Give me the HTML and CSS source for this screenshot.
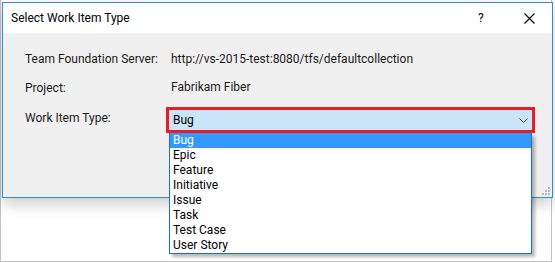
FILE: index.html
```html
<!DOCTYPE html>
<html>
<head>
<meta charset="utf-8">
<link rel="stylesheet" href="styles.css">
</head>
<body>
<div class="frame">
  <div class="dialog">
    <div class="titlebar">
      <span class="title">Select Work Item Type</span>
      <span class="help">?</span>
      <svg class="close" width="11" height="11" viewBox="0 0 11 11"><path d="M0.5 0.5 L10.5 10.5 M10.5 0.5 L0.5 10.5" stroke="#000" stroke-width="1.1" fill="none"/></svg>
    </div>
    <div class="content">
      <div class="form">
        <div class="label r1">Team Foundation Server:</div>
        <div class="value r1">http://vs-2015-test:8080/tfs/defaultcollection</div>
        <div class="label r2">Project:</div>
        <div class="value r2v">Fabrikam Fiber</div>
        <div class="label r3l">Work Item Type:</div>
        <div class="combo-wrap r3">
          <div class="combo">
            <span class="combo-text">Bug</span>
            <svg class="chevron" width="9" height="5" viewBox="0 0 9 5"><path d="M0.5 0.5 L4.5 4.5 L8.5 0.5" stroke="#444" stroke-width="1" fill="none"/></svg>
          </div>
          <ul class="list">
            <li class="sel">Bug</li>
            <li>Epic</li>
            <li>Feature</li>
            <li>Initiative</li>
            <li>Issue</li>
            <li>Task</li>
            <li>Test Case</li>
            <li>User Story</li>
          </ul>
        </div>
      </div>
      <svg class="grip" width="8" height="8" viewBox="0 0 8 8">
        <rect x="6" y="0" width="2" height="2" fill="#b9b9b9"/>
        <rect x="3" y="3" width="2" height="2" fill="#b9b9b9"/>
        <rect x="6" y="3" width="2" height="2" fill="#b9b9b9"/>
        <rect x="0" y="6" width="2" height="2" fill="#b9b9b9"/>
        <rect x="3" y="6" width="2" height="2" fill="#b9b9b9"/>
        <rect x="6" y="6" width="2" height="2" fill="#b9b9b9"/>
      </svg>
    </div>
  </div>
</div>
</body>
</html>
```
FILE: styles.css
```css
html, body {
  margin: 0;
  padding: 0;
  background: #ffffff;
}
body {
  font-family: Roboto, "Noto Sans", sans-serif;
  font-size: 12px;
  color: #000;
}
.frame {
  width: 550px;
  height: 259px;
  border-left: 1px solid #c3c3c3;
  border-right: 1px solid #c3c3c3;
  border-bottom: 1px solid #c3c3c3;
  padding-top: 2px;
  box-sizing: content-box;
}
.dialog {
  margin-left: 1px;
  width: 549px;
  height: 194px;
  border: 1px solid #2b8cd8;
  background: #f0f0f0;
  box-shadow: 0 6px 14px rgba(0, 0, 0, 0.2);
  position: relative;
}
.titlebar {
  height: 30px;
  background: #ffffff;
  display: flex;
  align-items: center;
}
.title {
  padding-left: 8px;
  flex: 1;
  line-height: 16px;
}
.help {
  width: 10px;
  margin-right: 36px;
  font-size: 12px;
}
.close {
  margin-right: 17px;
}
.content {
  height: 164px;
  position: relative;
}
.form {
  display: grid;
  grid-template-columns: 141px 369px;
  padding-left: 22px;
  padding-top: 19px;
}
.label, .value {
  line-height: 15px;
  color: #1a1a1a;
}
.value {
  padding-left: 5px;
}
.r2 {
  margin-top: 14px;
}
.r2v {
  margin-top: 13px;
  padding-bottom: 1px;
}
.r3, .r3l {
  margin-top: 11px;
}
.r3l {
  padding-top: 4px;
}
.combo-wrap {
  position: relative;
}
.combo {
  box-sizing: border-box;
  height: 26px;
  border: 3px solid #e81c24;
  background: #cce4f7;
  display: flex;
  align-items: center;
  padding-left: 4px;
  padding-right: 4px;
}
.combo-text {
  flex: 1;
  line-height: 15px;
  padding-top: 1px;
}
.list {
  position: absolute;
  left: 3px;
  top: 26px;
  width: 361px;
  margin: 0;
  padding: 0;
  list-style: none;
  background: #ffffff;
  border: 1px solid #1a6fc4;
  border-top: none;
  box-shadow: 3px 3px 3px rgba(0, 0, 0, 0.28);
}
.list li {
  height: 15px;
  line-height: 15px;
  padding-left: 3px;
}
.list li.sel {
  background: #3399ff;
  color: #ffffff;
}
.grip {
  position: absolute;
  right: 2px;
  bottom: 2px;
}
```
